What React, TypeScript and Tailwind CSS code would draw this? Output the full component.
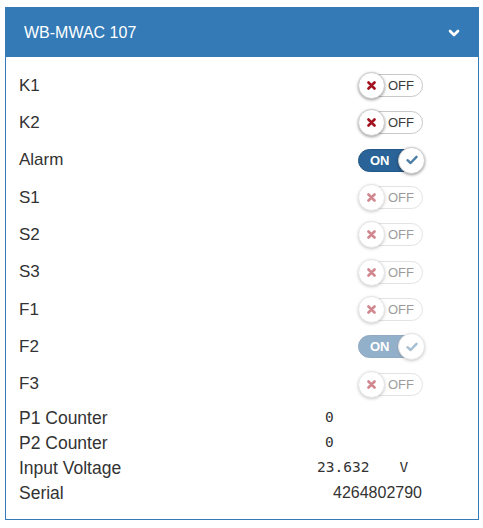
import { ChevronDown } from 'lucide-react';

type Row =
  | { label: string; kind: 'toggle'; on: boolean; disabled?: boolean }
  | { label: string; kind: 'value'; value: string; unit?: string; mono?: boolean; pad: string };

const rows: Row[] = [
  { label: 'K1', kind: 'toggle', on: false },
  { label: 'K2', kind: 'toggle', on: false },
  { label: 'Alarm', kind: 'toggle', on: true },
  { label: 'S1', kind: 'toggle', on: false, disabled: true },
  { label: 'S2', kind: 'toggle', on: false, disabled: true },
  { label: 'S3', kind: 'toggle', on: false, disabled: true },
  { label: 'F1', kind: 'toggle', on: false, disabled: true },
  { label: 'F2', kind: 'toggle', on: true, disabled: true },
  { label: 'F3', kind: 'toggle', on: false, disabled: true },
];

const values: Row[] = [
  { label: 'P1 Counter', kind: 'value', value: '0', mono: true, pad: 'pl-[12px]' },
  { label: 'P2 Counter', kind: 'value', value: '0', mono: true, pad: 'pl-[12px]' },
  { label: 'Input Voltage', kind: 'value', value: '23.632', unit: 'V', mono: true, pad: 'pl-[4px]' },
  { label: 'Serial', kind: 'value', value: '4264802790', pad: 'pl-[20px]' },
];

function Toggle({ on, disabled }: { on: boolean; disabled?: boolean }) {
  if (on) {
    return (
      <div className={`relative ml-[45px] w-[67px] h-[27px] ${disabled ? 'opacity-50' : ''}`}>
        <div className="absolute left-0 top-[2px] w-[60px] h-[23px] rounded-full bg-[#2a6397] border border-[#245886]">
          <span className="absolute left-[11px] top-[2px] text-[13px] leading-[17px] font-bold text-white">ON</span>
        </div>
        <div className="absolute left-[40px] top-0 w-[27px] h-[27px] rounded-full bg-white border border-[#ccc] shadow-[0_1px_3px_rgba(0,0,0,0.4)] flex items-center justify-center">
          <svg width="12" height="10" viewBox="0 0 12 10">
            <path d="M1.5 5.2 L4.6 8 L10.5 1.8" fill="none" stroke="#4d7fa6" strokeWidth="2.4" strokeLinecap="round" strokeLinejoin="round" />
          </svg>
        </div>
      </div>
    );
  }
  return (
    <div className={`relative ml-[45px] w-[66px] h-[27px] ${disabled ? 'opacity-50' : ''}`}>
      <div className="absolute left-[4px] top-[2px] w-[61px] h-[23px] rounded-full bg-white border border-[#c8c8c8]">
        <span className="absolute left-[25px] top-[2px] text-[13px] leading-[17px] text-[#3a3a3a]">OFF</span>
      </div>
      <div className="absolute left-0 top-0 w-[27px] h-[27px] rounded-full bg-white border border-[#ccc] shadow-[0_1px_3px_rgba(0,0,0,0.4)] flex items-center justify-center">
        <svg width="9" height="9" viewBox="0 0 9 9">
          <path d="M1.5 1.5 L7.5 7.5 M7.5 1.5 L1.5 7.5" stroke="#a3121f" strokeWidth="2.6" strokeLinecap="round" />
        </svg>
      </div>
    </div>
  );
}

export default function App() {
  return (
    <div className="w-[483px] h-[528px] bg-white pt-[7px] px-[4px] font-['Liberation_Sans',Arial,sans-serif] text-[#333]">
      <div className="ml-[1px] w-[474px] border border-[#337ab7]">
        <div className="h-[49px] bg-[#337ab7] flex items-center justify-between pl-[18px] pr-[16px] text-white">
          <span className="text-[16px]">WB-MWAC 107</span>
          <ChevronDown className="w-[16px] h-[16px]" strokeWidth={4} />
        </div>
        <div className="pt-[10px] pb-[13px] pl-[13px]">
          {rows.map((r) => (
            <div key={r.label} className="flex items-center h-[37.3px]">
              <div className="w-[294px] text-[17px]">{r.label}</div>
              {r.kind === 'toggle' && <Toggle on={r.on} disabled={r.disabled} />}
            </div>
          ))}
          <div className="mt-[3px]">
            {values.map((r) =>
              r.kind === 'value' ? (
                <div key={r.label} className="flex items-center h-[25px]">
                  <div className="w-[294px] text-[17.5px]">{r.label}</div>
                  <div className={`${r.pad} flex items-center`}>
                    <span className={r.mono ? "font-['DejaVu_Sans_Mono',monospace] text-[14.5px]" : 'text-[16px]'}>{r.value}</span>
                    {r.unit && <span className="ml-[30px] font-['DejaVu_Sans_Mono',monospace] text-[14.5px]">{r.unit}</span>}
                  </div>
                </div>
              ) : null
            )}
          </div>
        </div>
      </div>
    </div>
  );
}
